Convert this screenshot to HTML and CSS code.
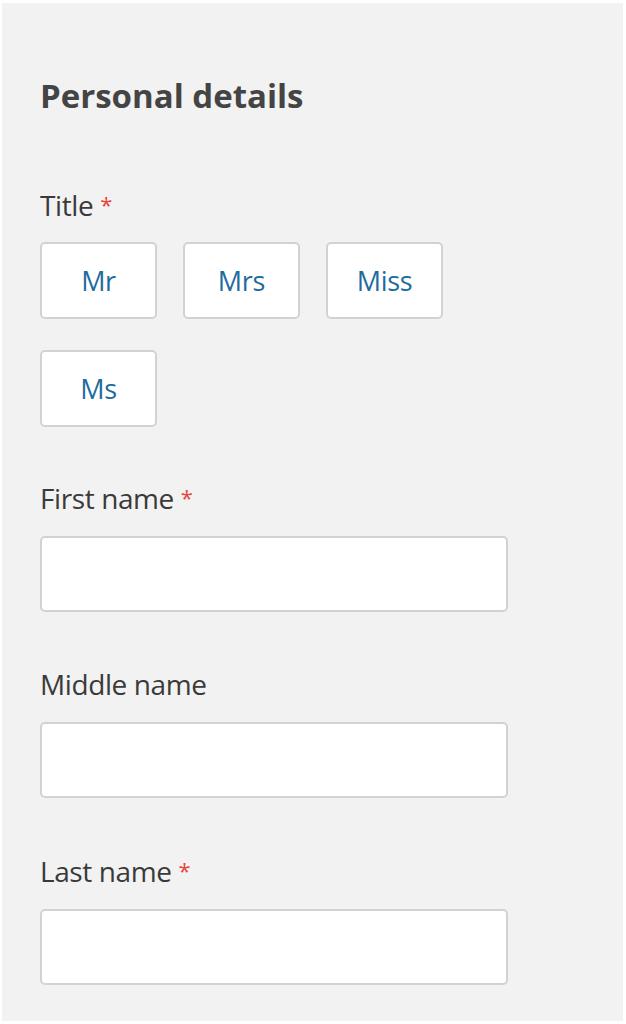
FILE: index.html
```html
<!DOCTYPE html>
<html lang="en">
<head>
<meta charset="utf-8">
<title>Personal details</title>
<link rel="stylesheet" href="styles.css">
</head>
<body>
<div class="frame">
  <form class="panel">
    <h1 class="heading">Personal details</h1>

    <div class="field field-title">
      <div class="label">Title <span class="req">*</span></div>
      <div class="choices">
        <button type="button" class="choice">Mr</button>
        <button type="button" class="choice">Mrs</button>
        <button type="button" class="choice">Miss</button>
        <button type="button" class="choice">Ms</button>
      </div>
    </div>

    <div class="field field-first">
      <label class="label" for="first">First name <span class="req">*</span></label>
      <input class="input" id="first" type="text">
    </div>

    <div class="field">
      <label class="label" for="middle">Middle name</label>
      <input class="input" id="middle" type="text">
    </div>

    <div class="field">
      <label class="label" for="last">Last name <span class="req">*</span></label>
      <input class="input" id="last" type="text">
    </div>
  </form>
</div>
</body>
</html>
```

FILE: styles.css
```css
html, body {
  margin: 0;
  padding: 0;
  background: #ffffff;
}

body {
  font-family: "Open Sans", "Noto Sans", sans-serif;
  color: #3c3c3c;
}

.frame {
  padding: 3px 3px 3px 2px;
}

.panel {
  background: #f2f2f2;
  height: 1018px;
  box-sizing: border-box;
  padding: 73px 0 0 38px;
}

.heading {
  margin: 0;
  font-size: 33px;
  line-height: 40px;
  font-weight: 700;
  color: #444444;
}

.field {
  width: 468px;
  margin-top: 57px;
}

.field-title {
  margin-top: 73px;
}

.field-first {
  margin-top: 55px;
}

.label {
  display: block;
  font-size: 28px;
  line-height: 30px;
  color: #3a3a3a;
  margin-bottom: 23px;
  letter-spacing: -0.4px;
}

.field-title .label {
  margin-bottom: 22px;
}

.req {
  color: #e8453c;
  font-size: 22px;
  vertical-align: 3px;
}

.choices {
  display: flex;
  flex-wrap: wrap;
  gap: 31px 26px;
}

.choice {
  width: 117px;
  height: 77px;
  box-sizing: border-box;
  background: #ffffff;
  border: 2px solid #d2d2d2;
  border-radius: 5px;
  font-family: inherit;
  font-size: 27px;
  color: #1e6b9e;
  padding: 0;
  letter-spacing: -0.3px;
}

.input {
  display: block;
  width: 468px;
  height: 76px;
  box-sizing: border-box;
  background: #ffffff;
  border: 2px solid #d2d2d2;
  border-radius: 5px;
  margin: 0;
  font-family: inherit;
  font-size: 24px;
}
```
